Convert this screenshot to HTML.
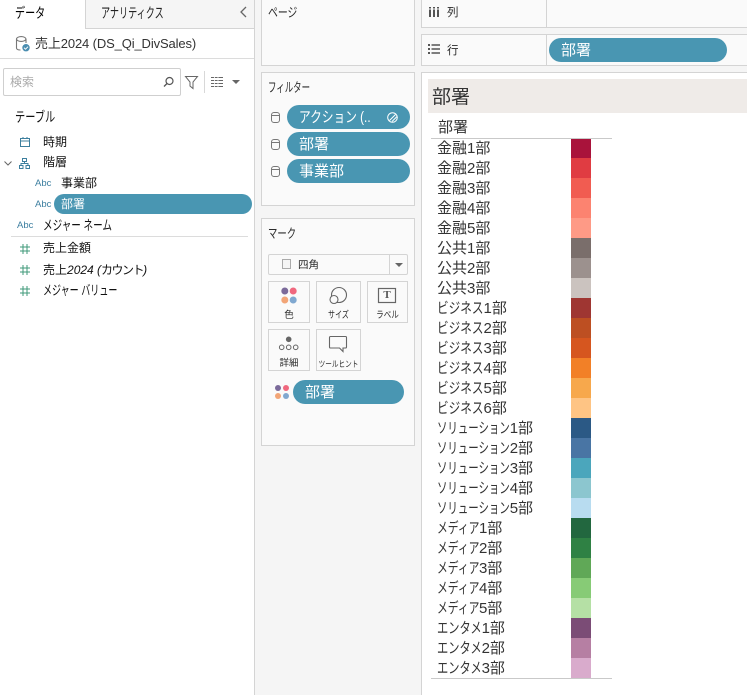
<!DOCTYPE html>
<html lang="ja"><head><meta charset="utf-8">
<style>
html,body{margin:0;padding:0;width:747px;height:695px;overflow:hidden;background:#f5f5f5}
body{position:relative;font-family:"Liberation Sans","Noto Sans CJK JP",sans-serif;color:#2b2b2b;font-size:12px}
.a{position:absolute;white-space:nowrap}
.t{position:absolute;white-space:nowrap;line-height:20px;transform-origin:0 50%}
.card{position:absolute;background:#fafafa;border:1px solid #d4d4d4;box-sizing:border-box}
.pill{position:absolute;background:#4996b2;color:#fff;border-radius:12px;height:24px;line-height:25px;font-size:15px;box-sizing:border-box;padding-left:12px;white-space:nowrap}
.btn{position:absolute;background:#fafafa;border:1px solid #d4d4d4;box-sizing:border-box;width:42px;height:42px}
.btn span{position:absolute;left:-6px;right:-6px;top:27px;text-align:center;font-size:9.5px;line-height:14px;white-space:nowrap}
svg{position:absolute;overflow:visible}
.abc{position:absolute;font-size:9.5px;color:#3d7fa0;line-height:12px}
.row{position:absolute;left:437px;margin-top:1px;font-size:15px;line-height:20px;color:#333;white-space:nowrap}
.bar{position:absolute;left:571px;width:20px;height:20px}
.k{display:inline-block;transform-origin:0 50%}
.b{transform:scaleX(.775);margin-right:-13.500px}
.s{transform:scaleX(.695);margin-right:-32px}
.m{transform:scaleX(.72);margin-right:-17px}
.e{transform:scaleX(.75);margin-right:-15px}
</style></head><body>

<!-- LEFT PANE -->
<div class="a" style="left:0;top:0;width:254px;height:695px;background:#fff;border-right:1px solid #d4d4d4"></div>
<div class="a" style="left:85px;top:0;width:169px;height:29px;background:#f5f5f5;border-left:1px solid #d4d4d4;border-bottom:1px solid #d4d4d4;box-sizing:border-box"></div>
<div class="t" style="left:15px;top:3px;color:#000;font-size:14px;transform:scaleX(.72)">データ</div>
<div class="t" style="left:101px;top:3px;color:#222;font-size:14px;transform:scaleX(.65)">アナリティクス</div>
<svg style="left:238px;top:6px" width="12" height="12"><path d="M8 1L3 6L8 11" fill="none" stroke="#666" stroke-width="1.300"/></svg>
<svg style="left:16px;top:36px" width="14" height="16"><path d="M.5 3v9c0 1.500 2 2 4 2M10 3v4" fill="none" stroke="#777" stroke-width="1.100"/><ellipse cx="5.200" cy="3" rx="4.700" ry="2.400" fill="none" stroke="#777" stroke-width="1.100"/><circle cx="10" cy="11.700" r="3.700" fill="#4a8db0"/><path d="M8 11.700l1.500 1.500L12 10.700" fill="none" stroke="#fff" stroke-width="1"/></svg>
<div class="t" style="left:35px;top:34px;color:#333;font-size:13px;letter-spacing:-.13px">売上2024 (DS_Qi_DivSales)</div>
<div class="a" style="left:0;top:58px;width:254px;height:1px;background:#dcdcdc"></div>
<div class="a" style="left:3px;top:68px;width:178px;height:28px;border:1px solid #cfcfcf;border-radius:2px;box-sizing:border-box"></div>
<div class="t" style="left:10px;top:72px;color:#aaa">検索</div>
<svg style="left:163px;top:76px" width="12" height="12"><circle cx="6.500" cy="5" r="3.500" fill="none" stroke="#555" stroke-width="1.200"/><path d="M4 7.500L1 10.500" stroke="#555" stroke-width="1.300"/></svg>
<svg style="left:185px;top:76px" width="14" height="13"><path d="M.5 .5h12L8 6v6.500l-3-2.500v-4z" fill="none" stroke="#666" stroke-width="1"/></svg>
<div class="a" style="left:204px;top:71px;width:1px;height:22px;background:#d8d8d8"></div>
<svg style="left:211px;top:77px" width="13" height="10"><path d="M0 .5h12M0 3.500h12M0 6.500h12M0 9.500h12" stroke="#666" stroke-width="1"/><path d="M3.500 0v10M7 0v10" stroke="#fff" stroke-width=".8"/></svg>
<svg style="left:232px;top:80px" width="8" height="4"><path d="M0 0h8L4 4z" fill="#666"/></svg>
<div class="t" style="left:15px;top:107px;color:#111;font-size:14px;transform:scaleX(.73)">テーブル</div>

<svg style="left:20px;top:137px" width="10" height="10"><rect x=".5" y="1.500" width="9" height="8" fill="none" stroke="#3d7f9e"/><path d="M0 4h10M3 0v2M7 0v2" stroke="#3d7f9e"/></svg>
<div class="t" style="left:43px;top:132px;color:#111">時期</div>
<svg style="left:4px;top:161px" width="8" height="5"><path d="M.5 .5L4 4L7.500 .5" fill="none" stroke="#666"/></svg>
<svg style="left:19px;top:158px" width="11" height="11"><rect x="3.500" y=".5" width="4" height="3" fill="none" stroke="#3d7f9e"/><rect x=".5" y="7.500" width="3.500" height="3" fill="none" stroke="#3d7f9e"/><rect x="7" y="7.500" width="3.500" height="3" fill="none" stroke="#3d7f9e"/><path d="M5.500 3.500v2M2 7.500v-2h7v2" fill="none" stroke="#3d7f9e"/></svg>
<div class="t" style="left:43px;top:152px;color:#111">階層</div>
<div class="abc" style="left:35px;top:178px">Abc</div>
<div class="t" style="left:61px;top:173px;color:#111">事業部</div>
<div class="abc" style="left:35px;top:199px">Abc</div>
<div class="a" style="left:54px;top:194px;width:198px;height:20px;border-radius:10px;background:#4996b2;color:#fff;line-height:21px;padding-left:7px;box-sizing:border-box">部署</div>
<div class="abc" style="left:17px;top:220px">Abc</div>
<div class="t" style="left:43px;top:216px;font-size:13.500px;color:#111;transform:scaleX(.71)">メジャー ネーム</div>
<div class="a" style="left:11px;top:236px;width:237px;height:1px;background:#dcdcdc"></div>
<svg style="left:20px;top:244px" width="10" height="10"><path d="M3 0v10M7 0v10M0 3h10M0 7h10" stroke="#3f9878" stroke-width="1"/></svg>
<div class="t" style="left:43px;top:238px;color:#111">売上金額</div>
<svg style="left:20px;top:265px" width="10" height="10"><path d="M3 0v10M7 0v10M0 3h10M0 7h10" stroke="#3f9878" stroke-width="1"/></svg>
<div class="t" style="left:43px;top:260px;color:#111">売上<i>2024 (</i><span style="letter-spacing:-1.500px">カウント</span><i>)</i></div>
<svg style="left:20px;top:286px" width="10" height="10"><path d="M3 0v10M7 0v10M0 3h10M0 7h10" stroke="#3f9878" stroke-width="1"/></svg>
<div class="t" style="left:43px;top:281px;font-size:13.500px;color:#111;transform:scaleX(.67)">メジャー バリュー</div>

<!-- PAGES -->
<div class="card" style="left:261px;top:-2px;width:154px;height:68px"></div>
<div class="t" style="left:268px;top:3px;font-size:13px;transform:scaleX(.76)">ページ</div>

<!-- FILTERS -->
<div class="card" style="left:261px;top:72px;width:154px;height:134px"></div>
<div class="t" style="left:268px;top:78px;font-size:13px;transform:scaleX(.65)">フィルター</div>
<svg style="left:271px;top:112px" width="9" height="11"><rect x=".5" y=".5" width="8" height="10" rx="2.500" fill="none" stroke="#777"/><path d="M.5 3.500h8" stroke="#777"/></svg>
<svg style="left:271px;top:139px" width="9" height="11"><rect x=".5" y=".5" width="8" height="10" rx="2.500" fill="none" stroke="#777"/><path d="M.5 3.500h8" stroke="#777"/></svg>
<svg style="left:271px;top:166px" width="9" height="11"><rect x=".5" y=".5" width="8" height="10" rx="2.500" fill="none" stroke="#777"/><path d="M.5 3.500h8" stroke="#777"/></svg>
<div class="pill" style="left:287px;top:105px;width:123px"><span style="display:inline-block;transform:scaleX(.78);transform-origin:0 50%">アクション (..</span></div>
<svg style="left:387px;top:112px" width="12" height="12"><circle cx="5.500" cy="5.500" r="4.800" fill="none" stroke="#fff"/><path d="M2.500 8.500L8.500 2.500M5 9.500L10 4.500" stroke="#fff" fill="none"/></svg>
<div class="pill" style="left:287px;top:132px;width:123px">部署</div>
<div class="pill" style="left:287px;top:159px;width:123px">事業部</div>

<!-- MARKS -->
<div class="card" style="left:261px;top:218px;width:154px;height:228px"></div>
<div class="t" style="left:268px;top:224px;font-size:13px;transform:scaleX(.72)">マーク</div>
<div class="a" style="left:268px;top:254px;width:140px;height:21px;border:1px solid #d4d4d4;border-radius:2px;box-sizing:border-box"></div>
<div class="a" style="left:389px;top:254px;width:1px;height:21px;background:#d4d4d4"></div>
<div class="a" style="left:282px;top:259px;width:9px;height:10px;border:1px solid #aaa;background:#f5f5f5;box-sizing:border-box"></div>
<div class="t" style="left:298px;top:255px;font-size:10.500px">四角</div>
<svg style="left:395px;top:263px" width="8" height="4"><path d="M0 0h8L4 4z" fill="#666"/></svg>

<div class="btn" style="left:268px;top:281px"><svg style="left:12px;top:5px" width="18" height="18"><circle cx="3.800" cy="4" r="3.500" fill="#7b6a9a"/><circle cx="12.200" cy="4" r="3.500" fill="#f0687e"/><circle cx="3.800" cy="13" r="3.500" fill="#f2a577"/><circle cx="12.200" cy="13" r="3.500" fill="#80a8d0"/></svg><span>色</span></div>
<div class="btn" style="left:316px;top:281px;width:45px"><svg style="left:12px;top:5px" width="20" height="20"><circle cx="10" cy="8" r="7.500" fill="none" stroke="#666" stroke-width="1.100"/><circle cx="5" cy="12.500" r="4" fill="#fafafa" stroke="#666" stroke-width="1.100"/></svg><span style="transform:scaleX(.74)">サイズ</span></div>
<div class="btn" style="left:367px;top:281px;width:41px"><svg style="left:10px;top:6px" width="19" height="15"><rect x=".5" y=".5" width="17" height="14" fill="none" stroke="#666" stroke-width="1.200"/></svg><div class="a" style="left:10px;top:5px;width:18px;text-align:center;font:bold 11px/17px 'Liberation Serif',serif;color:#555">T</div><span style="transform:scaleX(.8)">ラベル</span></div>
<div class="btn" style="left:268px;top:329px"><svg style="left:10px;top:5px" width="22" height="18"><circle cx="9.700" cy="4.300" r="2.800" fill="#666"/><circle cx="2.700" cy="12.300" r="2.300" fill="none" stroke="#666"/><circle cx="9.700" cy="12.300" r="2.300" fill="none" stroke="#666"/><circle cx="16.700" cy="12.300" r="2.300" fill="none" stroke="#666"/></svg><span>詳細</span></div>
<div class="btn" style="left:316px;top:329px;width:45px"><svg style="left:12px;top:6px" width="20" height="20"><path d="M1.500 .5h15a1 1 0 0 1 1 1v9.500a1 1 0 0 1-1 1h-2.500v3.500l-3.500-3.500h-9a1 1 0 0 1-1-1v-9.500a1 1 0 0 1 1-1z" fill="none" stroke="#666" stroke-width="1.100"/></svg><span style="font-size:8.500px;transform:scaleX(.78)">ツールヒント</span></div>

<svg style="left:275px;top:385px" width="15" height="15"><circle cx="3" cy="3" r="3" fill="#7b6a9a"/><circle cx="11" cy="3" r="3" fill="#f0687e"/><circle cx="3" cy="11" r="3" fill="#f2a577"/><circle cx="11" cy="11" r="3" fill="#80a8d0"/></svg>
<div class="pill" style="left:293px;top:380px;width:111px">部署</div>

<!-- SHELVES -->
<div class="card" style="left:421px;top:-2px;width:330px;height:30px"></div>
<div class="a" style="left:546px;top:0;width:1px;height:27px;background:#d4d4d4"></div>
<svg style="left:429px;top:6px" width="10" height="11"><path d="M1 3.500v7.500M5 3.500v7.500M9 3.500v7.500" stroke="#555" stroke-width="2"/><path d="M1 1v1.500M5 1v1.500M9 1v1.500" stroke="#555" stroke-width="2"/></svg>
<div class="t" style="left:447px;top:3px;font-size:11.500px">列</div>
<div class="card" style="left:421px;top:34px;width:330px;height:32px"></div>
<div class="a" style="left:546px;top:35px;width:1px;height:30px;background:#d4d4d4"></div>
<svg style="left:428px;top:44px" width="12" height="10"><path d="M0 1h2M0 5h2M0 9h2" stroke="#555" stroke-width="2"/><path d="M3.500 1H12M3.500 5H12M3.500 9H12" stroke="#555" stroke-width="1.600"/></svg>
<div class="t" style="left:447px;top:41px;font-size:11.500px">行</div>
<div class="pill" style="left:549px;top:38px;width:178px">部署</div>

<!-- VIEW -->
<div class="a" style="left:421px;top:72px;width:330px;height:630px;background:#fff;border:1px solid #d4d4d4;box-sizing:border-box"></div>
<div class="a" style="left:428px;top:79px;width:319px;height:34px;background:#efebe8"></div>
<div class="a" style="left:432px;top:86px;font-size:19px;line-height:24px;color:#333">部署</div>
<div class="a" style="left:438px;top:118px;font-size:15px;line-height:20px;color:#333">部署</div>
<div class="a" style="left:431px;top:138px;width:181px;height:1px;background:#c9c9c9"></div>
<div class="a" style="left:431px;top:678px;width:181px;height:1px;background:#c9c9c9"></div>

<div class="row" style="top:138px">金融1部</div><div class="bar" style="top:139px;height:19px;background:#a9133b"></div>
<div class="row" style="top:158px">金融2部</div><div class="bar" style="top:158px;background:#e03c42"></div>
<div class="row" style="top:178px">金融3部</div><div class="bar" style="top:178px;background:#f15c51"></div>
<div class="row" style="top:198px">金融4部</div><div class="bar" style="top:198px;background:#fc8370"></div>
<div class="row" style="top:218px">金融5部</div><div class="bar" style="top:218px;background:#fe9a86"></div>
<div class="row" style="top:238px">公共1部</div><div class="bar" style="top:238px;background:#7a6e6b"></div>
<div class="row" style="top:258px">公共2部</div><div class="bar" style="top:258px;background:#9c918e"></div>
<div class="row" style="top:278px">公共3部</div><div class="bar" style="top:278px;background:#cbc3bf"></div>
<div class="row" style="top:298px"><span class="k b">ビジネス</span>1部</div><div class="bar" style="top:298px;background:#9f3632"></div>
<div class="row" style="top:318px"><span class="k b">ビジネス</span>2部</div><div class="bar" style="top:318px;background:#bd4f22"></div>
<div class="row" style="top:338px"><span class="k b">ビジネス</span>3部</div><div class="bar" style="top:338px;background:#d6561f"></div>
<div class="row" style="top:358px"><span class="k b">ビジネス</span>4部</div><div class="bar" style="top:358px;background:#f28027"></div>
<div class="row" style="top:378px"><span class="k b">ビジネス</span>5部</div><div class="bar" style="top:378px;background:#f7a84c"></div>
<div class="row" style="top:398px"><span class="k b">ビジネス</span>6部</div><div class="bar" style="top:398px;background:#fec484"></div>
<div class="row" style="top:418px"><span class="k s">ソリューション</span>1部</div><div class="bar" style="top:418px;background:#2b5985"></div>
<div class="row" style="top:438px"><span class="k s">ソリューション</span>2部</div><div class="bar" style="top:438px;background:#4975a4"></div>
<div class="row" style="top:458px"><span class="k s">ソリューション</span>3部</div><div class="bar" style="top:458px;background:#4ba6bc"></div>
<div class="row" style="top:478px"><span class="k s">ソリューション</span>4部</div><div class="bar" style="top:478px;background:#8cc6cf"></div>
<div class="row" style="top:498px"><span class="k s">ソリューション</span>5部</div><div class="bar" style="top:498px;background:#b8dcf0"></div>
<div class="row" style="top:518px"><span class="k m">メディア</span>1部</div><div class="bar" style="top:518px;background:#22673f"></div>
<div class="row" style="top:538px"><span class="k m">メディア</span>2部</div><div class="bar" style="top:538px;background:#2f8144"></div>
<div class="row" style="top:558px"><span class="k m">メディア</span>3部</div><div class="bar" style="top:558px;background:#60a857"></div>
<div class="row" style="top:578px"><span class="k m">メディア</span>4部</div><div class="bar" style="top:578px;background:#87cb76"></div>
<div class="row" style="top:598px"><span class="k m">メディア</span>5部</div><div class="bar" style="top:598px;background:#b5e0a5"></div>
<div class="row" style="top:618px"><span class="k e">エンタメ</span>1部</div><div class="bar" style="top:618px;background:#7b4c76"></div>
<div class="row" style="top:638px"><span class="k e">エンタメ</span>2部</div><div class="bar" style="top:638px;background:#b67fa3"></div>
<div class="row" style="top:658px"><span class="k e">エンタメ</span>3部</div><div class="bar" style="top:658px;background:#d9abcc"></div>

</body></html>
